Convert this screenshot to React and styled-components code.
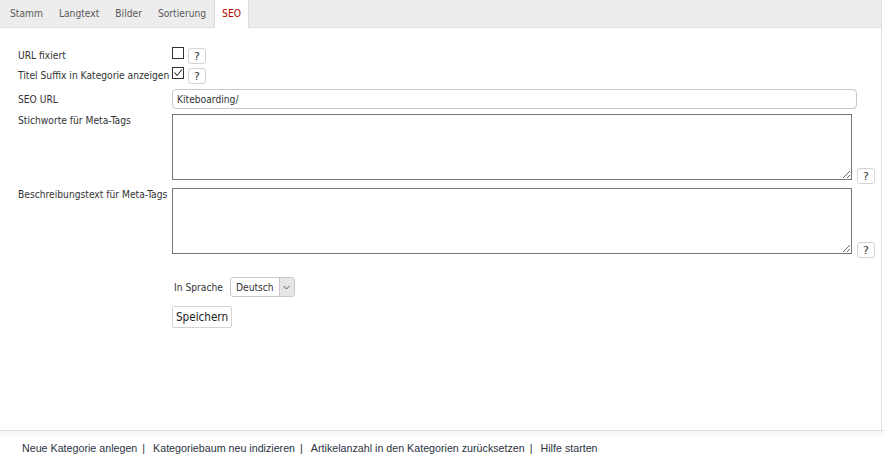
import styled, { createGlobalStyle } from "styled-components"

const GlobalStyle = createGlobalStyle`
    html, body {
        margin: 0;
        padding: 0;
        background: #ffffff;
    }
    body {
        font-family: "DejaVu Sans Condensed", "DejaVu Sans", sans-serif;
        font-size: 10.2px;
        color: #333333;
    }
`

const tabs = ["Stamm", "Langtext", "Bilder", "Sortierung", "SEO"]

export default function App () {
    return (
        <Page>
            <GlobalStyle />
            <Main>
                <TabBar>
                    {tabs.map(t => (
                        <Tab key={t} active={t === "SEO"}>{t}</Tab>
                    ))}
                </TabBar>

                <Form>
                    <CheckRow>
                        <Label>URL fixiert</Label>
                        <Controls>
                            <Box />
                            <Help>?</Help>
                        </Controls>
                    </CheckRow>
                    <CheckRow>
                        <Label>Titel Suffix in Kategorie anzeigen</Label>
                        <Controls>
                            <Box>
                                <svg width="10" height="10" viewBox="0 0 10 10">
                                    <path d="M1.5 4.5 L4 7.5 L9 1.5" fill="none" stroke="#333" strokeWidth="1.1" />
                                </svg>
                            </Box>
                            <Help>?</Help>
                        </Controls>
                    </CheckRow>

                    <FieldRow>
                        <Label>SEO URL</Label>
                        <TextInput defaultValue="Kiteboarding/" />
                    </FieldRow>

                    <AreaRow>
                        <Label>Stichworte für Meta-Tags</Label>
                        <TextArea />
                        <Help>?</Help>
                    </AreaRow>

                    <AreaRow>
                        <Label>Beschreibungstext für Meta-Tags</Label>
                        <TextArea />
                        <Help>?</Help>
                    </AreaRow>

                    <LangRow>
                        <span>In Sprache</span>
                        <Select>
                            <SelectText>Deutsch</SelectText>
                            <SelectArrow>
                                <svg width="7" height="5" viewBox="0 0 7 5">
                                    <path d="M0.5 1 L3.5 4 L6.5 1" fill="none" stroke="#555" strokeWidth="1" />
                                </svg>
                            </SelectArrow>
                        </Select>
                    </LangRow>

                    <SaveRow>
                        <SaveButton>Speichern</SaveButton>
                    </SaveRow>
                </Form>
            </Main>

            <Footer>
                <FooterLink>Neue Kategorie anlegen</FooterLink>
                <Sep>|</Sep>
                <FooterLink>Kategoriebaum neu indizieren</FooterLink>
                <Sep>|</Sep>
                <FooterLink>Artikelanzahl in den Kategorien zurücksetzen</FooterLink>
                <Sep>|</Sep>
                <FooterLink>Hilfe starten</FooterLink>
            </Footer>
        </Page>
    )
}

const Page = styled.div`
    width: 884px;
    height: 464px;
    display: flex;
    flex-direction: column;
    overflow: hidden;
`
const Main = styled.div`
    height: 430px;
    border-right: 1px solid #e2e2e2;
    width: 881px;
`
const TabBar = styled.div`
    height: 27px;
    display: flex;
    background: #ededed;
    border-bottom: 1px solid #dcdcdc;
    padding-left: 2px;
`
const Tab = styled.div`
    height: 28px;
    padding: 0 7px 2px 7px;
    display: flex;
    align-items: center;
    box-sizing: border-box;
    color: ${props => props.active ? "#b20000" : "#5a5a5a"};
    background: ${props => props.active ? "#ffffff" : "transparent"};
    border-left: 1px solid ${props => props.active ? "#dcdcdc" : "transparent"};
    border-right: 1px solid ${props => props.active ? "#dcdcdc" : "transparent"};
`
const Form = styled.div`
    padding: 17px 0 0 18px;
    display: flex;
    flex-direction: column;
`
const Label = styled.div`
    width: 154px;
    flex-shrink: 0;
    white-space: nowrap;
    color: #333;
`
const CheckRow = styled.div`
    display: flex;
    align-items: center;
    height: 20px;
`
const Controls = styled.div`
    display: flex;
    align-items: center;
    gap: 3px;
`
const Box = styled.div`
    width: 10px;
    height: 10px;
    border: 1px solid #333;
    display: flex;
    align-items: center;
    justify-content: center;
    margin-top: -4px;
    background: #fff;
`
const Help = styled.div`
    width: 16px;
    height: 14px;
    border: 1px solid #d4d4d4;
    border-radius: 3px;
    display: flex;
    align-items: center;
    justify-content: center;
    font-family: "DejaVu Sans", sans-serif;
    font-size: 11px;
    color: #333;
    box-sizing: content-box;
    margin-left: 1px;
    margin-top: 2px;
    flex-shrink: 0;
`
const FieldRow = styled.div`
    display: flex;
    align-items: center;
    margin-top: 4px;
`
const TextInput = styled.input`
    width: 685px;
    height: 20px;
    box-sizing: border-box;
    border: 1px solid #c8c8c8;
    border-radius: 4px;
    padding: 0 4px;
    font-family: inherit;
    font-size: 10.2px;
    color: #333;
    outline: none;
`
const AreaRow = styled.div`
    display: flex;
    align-items: flex-end;
    margin-top: 5px;
    & + & {
        margin-top: 8px;
    }
    ${Label} {
        align-self: flex-start;
        margin-top: 1px;
    }
    ${Help} {
        margin-left: 5px;
        margin-bottom: -4px;
    }
`
const TextArea = styled.textarea`
    width: 680px;
    height: 66px;
    box-sizing: border-box;
    border: 1px solid #777;
    resize: vertical;
    margin: 0;
    outline: none;
    font-family: inherit;
`
const LangRow = styled.div`
    display: flex;
    align-items: center;
    gap: 7px;
    margin: 23px 0 0 156px;
`
const Select = styled.div`
    display: flex;
    height: 20px;
    box-sizing: border-box;
    border: 1px solid #c8c8c8;
    border-radius: 3px;
    overflow: hidden;
`
const SelectText = styled.div`
    padding: 0 5px;
    display: flex;
    align-items: center;
    color: #333;
`
const SelectArrow = styled.div`
    width: 14px;
    display: flex;
    align-items: center;
    justify-content: center;
    background: #e6e6e6;
    border-left: 1px solid #c8c8c8;
`
const SaveRow = styled.div`
    margin: 9px 0 0 154px;
`
const SaveButton = styled.button`
    height: 22px;
    padding: 0 3px;
    background: #fff;
    border: 1px solid #d4d4d4;
    border-radius: 2px;
    font-family: "DejaVu Sans Condensed", "DejaVu Sans", sans-serif;
    font-size: 11.6px;
    color: #222;
`
const Footer = styled.div`
    flex: 1;
    border-top: 1px solid #dddddd;
    background: linear-gradient(#f4f4f4 0, #ffffff 6px);
    display: flex;
    align-items: center;
    padding-left: 22px;
    font-family: "Liberation Sans", Arial, sans-serif;
    font-size: 10.7px;
    color: #2b3342;
`
const FooterLink = styled.span`
    color: #2b3342;
`
const Sep = styled.span`
    margin: 0 8px 0 5px;
    color: #2b3342;
`
